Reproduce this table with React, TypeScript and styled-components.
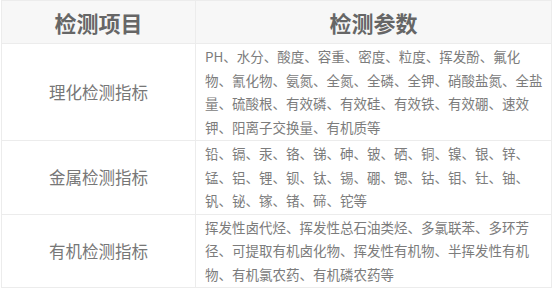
import styled, { createGlobalStyle } from 'styled-components'

const GlobalStyle = createGlobalStyle`
  html, body {
    margin: 0;
    padding: 0;
    background: #fff;
  }
  body {
    font-family: "Noto Sans CJK SC", "Noto Sans", sans-serif;
  }
`

const Page = styled.div`
  padding: 0 0 0 1px;
`

const Table = styled.table`
  border-collapse: collapse;
  table-layout: fixed;
  width: 549px;
`

const HeadCell = styled.th<{ $width: number }>`
  width: ${(p) => p.$width}px;
  height: 42px;
  padding: 0;
  background: #f7f7f7;
  border: 1px solid #ececec;
  color: #666;
  font-size: 22px;
  font-weight: 700;
  text-align: center;
  vertical-align: middle;
`

const NameCell = styled.td`
  padding: 0;
  border: 1px solid #ececec;
  color: #777;
  font-size: 16.5px;
  text-align: center;
  vertical-align: middle;
`

const ParamCell = styled.td`
  padding: 1px 7px 1px 9px;
  border: 1px solid #ececec;
  color: #7c7c7c;
  font-size: 13.5px;
  line-height: 23.5px;
  text-align: left;
  vertical-align: middle;
`

const rows = [
  {
    name: '理化检测指标',
    params:
      'PH、水分、酸度、容重、密度、粒度、挥发酚、氟化物、氰化物、氨氮、全氮、全磷、全钾、硝酸盐氮、全盐量、硫酸根、有效磷、有效硅、有效铁、有效硼、速效钾、阳离子交换量、有机质等',
  },
  {
    name: '金属检测指标',
    params:
      '铅、镉、汞、铬、锑、砷、铍、硒、铜、镍、银、锌、锰、铝、锂、钡、钛、锡、硼、锶、钴、钼、钍、铀、钒、铋、镓、锗、碲、铊等',
  },
  {
    name: '有机检测指标',
    params:
      '挥发性卤代烃、挥发性总石油类烃、多氯联苯、多环芳径、可提取有机卤化物、挥发性有机物、半挥发性有机物、有机氯农药、有机磷农药等',
  },
]

export default function App() {
  return (
    <>
      <GlobalStyle />
      <Page>
        <Table>
          <thead>
            <tr>
              <HeadCell $width={193}>检测项目</HeadCell>
              <HeadCell $width={355}>检测参数</HeadCell>
            </tr>
          </thead>
          <tbody>
            {rows.map((row) => (
              <tr key={row.name}>
                <NameCell>{row.name}</NameCell>
                <ParamCell>{row.params}</ParamCell>
              </tr>
            ))}
          </tbody>
        </Table>
      </Page>
    </>
  )
}
